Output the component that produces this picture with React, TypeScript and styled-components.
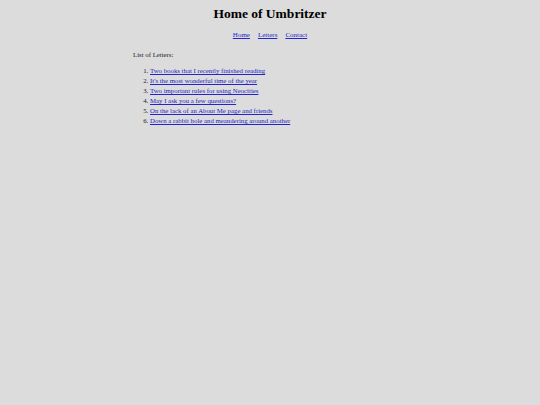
import React from 'react';
import styled, { createGlobalStyle } from 'styled-components';

const GlobalStyle = createGlobalStyle`
  html, body {
    margin: 0;
    padding: 0;
    background: #dcdcdc;
  }
  body {
    font-family: "Liberation Serif", "Times New Roman", serif;
    color: #000;
  }
`;

const Page = styled.div`
  min-height: 405px;
  padding-top: 6px;
`;

const Title = styled.h1`
  margin: 0;
  font-size: 13.5px;
  line-height: 16px;
  font-weight: bold;
  text-align: center;
`;

const Nav = styled.nav`
  display: flex;
  justify-content: center;
  gap: 8px;
  margin-top: 9px;
  font-size: 7px;
  line-height: 9px;
`;

const Link = styled.a`
  color: #2424c8;
  text-decoration: underline;
`;

const Content = styled.main`
  width: 274px;
  margin: 10px auto 0;
  font-size: 6.8px;
  line-height: 10px;
  color: #222;
`;

const Heading = styled.p`
  margin: 0 0 6px;
`;

const Letters = styled.ol`
  margin: 0;
  padding-left: 17px;
`;

const Item = styled.li`
  line-height: 10px;
`;

const letters = [
  'Two books that I recently finished reading',
  "It's the most wonderful time of the year",
  'Two important rules for using Neocities',
  'May I ask you a few questions?',
  'On the lack of an About Me page and friends',
  'Down a rabbit hole and meandering around another',
];

const App = () => (
  <>
    <GlobalStyle />
    <Page>
      <Title>Home of Umbritzer</Title>
      <Nav>
        <Link href="#">Home</Link>
        <Link href="#">Letters</Link>
        <Link href="#">Contact</Link>
      </Nav>
      <Content>
        <Heading>List of Letters:</Heading>
        <Letters>
          {letters.map((title) => (
            <Item key={title}>
              <Link href="#">{title}</Link>
            </Item>
          ))}
        </Letters>
      </Content>
    </Page>
  </>
);

export default App;
